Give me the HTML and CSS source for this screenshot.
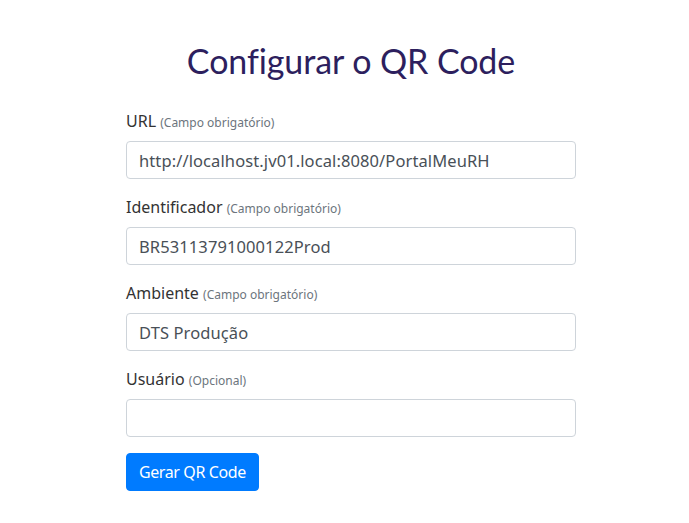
FILE: index.html
```html
<!DOCTYPE html>
<html lang="pt-BR">
<head>
    <meta charset="UTF-8">
    <title>Configurar o QR Code</title>
    <link rel="stylesheet" href="styles.css">
</head>
<body>
    <div class="container">
        <h1 class="main-title">Configurar o QR Code</h1>

        <form class="qr-form">
            <div class="form-group">
                <label>URL <small>(Campo obrigatório)</small></label>
                <input class="form-control" type="text" value="http://localhost.jv01.local:8080/PortalMeuRH">
            </div>
            <div class="form-group">
                <label>Identificador <small>(Campo obrigatório)</small></label>
                <input class="form-control" type="text" value="BR53113791000122Prod">
            </div>
            <div class="form-group">
                <label>Ambiente <small>(Campo obrigatório)</small></label>
                <input class="form-control" type="text" value="DTS Produção">
            </div>
            <div class="form-group">
                <label>Usuário <small>(Opcional)</small></label>
                <input class="form-control" type="text" value="">
            </div>
            <button class="btn-primary" type="button">Gerar QR Code</button>
        </form>
    </div>
</body>
</html>
```

FILE: styles.css
```css
body {
    font-family: 'Noto Sans', 'Open Sans', sans-serif;
    background-color: #fff;
    color: #212529;
    margin: 0;
    padding: 0 0 0 13px;
}

.container {
    width: 450px;
    margin: 0 auto;
}

.main-title {
    font-family: 'Lato', 'Noto Sans', sans-serif;
    font-size: 34px;
    letter-spacing: -0.1px;
    font-weight: 400;
    color: #2d1f5e;
    text-align: center;
    line-height: 43px;
    margin: 39px 0 27px;
}

.form-group {
    margin-bottom: 16px;
}

.form-group label {
    display: block;
    font-size: 16px;
    line-height: 24px;
    height: 24px;
    color: #333;
    margin-bottom: 8px;
}

.form-group small {
    font-size: 12px;
    line-height: 1;
    color: #6c757d;
}

.form-control {
    display: block;
    box-sizing: border-box;
    width: 100%;
    height: 38px;
    padding: 6px 12px;
    font-family: inherit;
    font-size: 16.5px;
    letter-spacing: 0.1px;
    color: #495057;
    border: 1px solid #ced4da;
    border-radius: 4px;
    background: #fff;
    outline: none;
}

.btn-primary {
    font-family: inherit;
    font-size: 16px;
    line-height: 24px;
    letter-spacing: -0.4px;
    color: #fff;
    background: #007bff;
    border: 1px solid #007bff;
    border-radius: 4px;
    padding: 6px 12px;
    cursor: pointer;
}
```
